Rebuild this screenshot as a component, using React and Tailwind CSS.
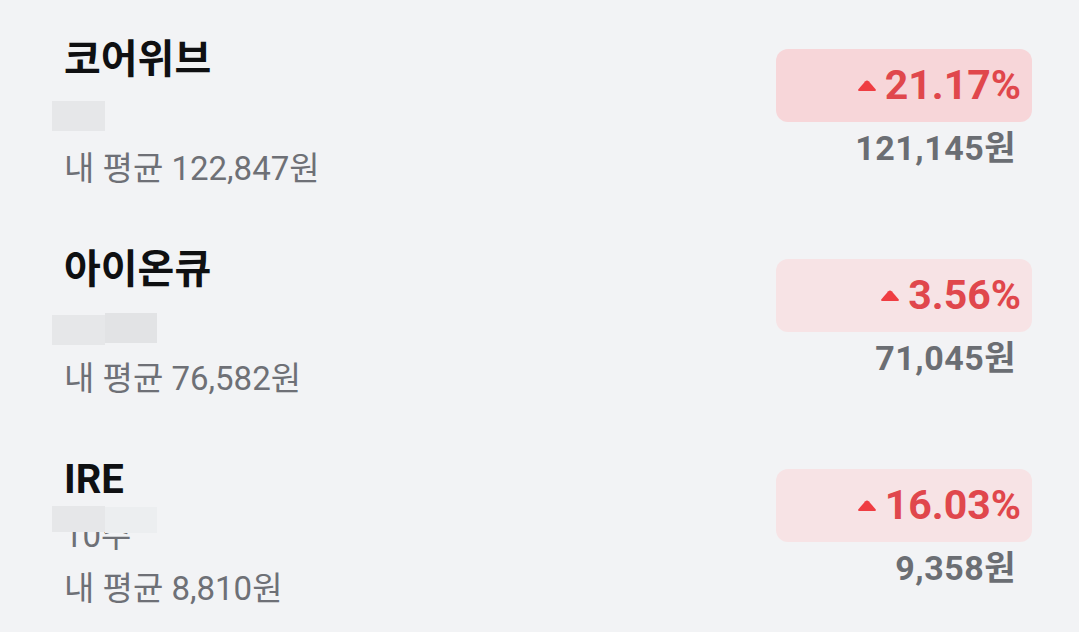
import React from 'react';

const STOCKS = [
  {
    name: '코어위브',
    qty: null,
    boxes: [{ left: 'left-[-12px]', top: 'top-[5px]', w: 'w-[53px]', h: 'h-[30px]', bg: 'bg-[#e6e7e9]' }],
    avg: '122,847',
    rate: '21.17%',
    price: '121,145',
    badge: 'bg-[#f7d6d9]',
  },
  {
    name: '아이온큐',
    qty: null,
    boxes: [
      { left: 'left-[-12px]', top: 'top-[9px]', w: 'w-[53px]', h: 'h-[30px]', bg: 'bg-[#e6e7e9]' },
      { left: 'left-[41px]', top: 'top-[7px]', w: 'w-[52px]', h: 'h-[30px]', bg: 'bg-[#e2e3e5]' },
    ],
    avg: '76,582',
    rate: '3.56%',
    price: '71,045',
    badge: 'bg-[#f7e3e5]',
  },
  {
    name: 'IRE',
    qty: '10주',
    boxes: [
      { left: 'left-[-12px]', top: 'top-[-10px]', w: 'w-[53px]', h: 'h-[26px]', bg: 'bg-[#e6e7e9]' },
      { left: 'left-[41px]', top: 'top-[-9px]', w: 'w-[52px]', h: 'h-[26px]', bg: 'bg-[#eceef0]' },
    ],
    avg: '8,810',
    rate: '16.03%',
    price: '9,358',
    badge: 'bg-[#f7e3e5]',
  },
];

const Up = () => (
  <svg width="20" height="12" viewBox="0 0 20 12" className="shrink-0">
    <path d="M8.3 1.2 Q10 -0.4 11.7 1.2 L18.6 9.2 Q19.6 11 17.6 11 H2.4 Q0.4 11 1.4 9.2 Z" fill="#ef3d42" />
  </svg>
);

export default function App() {
  return (
    <div className="min-h-screen bg-[#f2f3f5] pl-[64px] pr-[47px]" style={{ fontFamily: 'Roboto, "Noto Sans CJK KR", sans-serif' }}>
      {STOCKS.map((s) => (
        <div key={s.name} className="flex justify-between items-start h-[210px]">
          {/* left: name / qty / avg */}
          <div className="pt-[36px]">
            <div className="text-[40px] leading-[48px] font-bold text-[#0f1012]">{s.name}</div>
            <div className="relative mt-[12px] h-[40px] text-[33px] leading-[40px] text-[#6e7076]">
              {s.qty}
              {s.boxes.map((b, i) => (
                <div key={i} className={`absolute ${b.left} ${b.top} ${b.w} ${b.h} ${b.bg}`} />
              ))}
            </div>
            <div className="mt-[13px] text-[33px] leading-[40px] text-[#6e7076]">내 평균 {s.avg}원</div>
          </div>

          {/* right: rate badge / price */}
          <div className="pt-[49px] flex flex-col items-end">
            <div className={`w-[256px] h-[73px] rounded-[12px] ${s.badge} flex items-center justify-end gap-[8px] pr-[11px]`}>
              <Up />
              <span className="text-[41px] leading-none font-bold text-[#e0474c]">{s.rate}</span>
            </div>
            <div className="mt-[6px] pr-[16px] text-[34px] leading-[40px] font-bold tracking-[0.5px] text-[#6b6e73]">{s.price}원</div>
          </div>
        </div>
      ))}
    </div>
  );
}
